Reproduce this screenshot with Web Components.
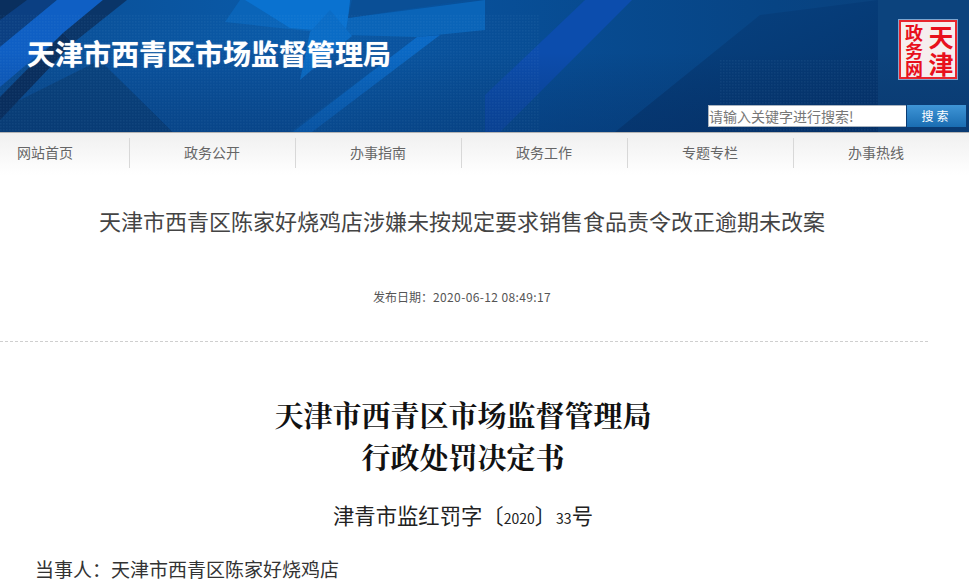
<!DOCTYPE html>
<html lang="zh-CN"><head><meta charset="utf-8"><title>天津市西青区市场监督管理局</title>
<style>
html,body{margin:0;padding:0;background:#fff;overflow:hidden;height:584px}
body{font-family:"Liberation Sans","Noto Sans CJK SC",sans-serif}
</style></head><body>
<site-banner>
  <span slot="title">天津市西青区市场监督管理局</span>
</site-banner>
<site-nav>
  <nav-item first>网站首页</nav-item><nav-item>政务公开</nav-item><nav-item>办事指南</nav-item><nav-item>政务工作</nav-item><nav-item>专题专栏</nav-item><nav-item>办事热线</nav-item>
</site-nav>
<article-head date="2020-06-12 08:49:17">天津市西青区陈家好烧鸡店涉嫌未按规定要求销售食品责令改正逾期未改案</article-head>
<article-body></article-body>
<script>
function def(name,html){customElements.define(name,class extends HTMLElement{constructor(){super();const s=this.attachShadow({mode:'open'});s.innerHTML=html;}connectedCallback(){const d=this.shadowRoot.querySelector('[data-date]');if(d)d.textContent=this.getAttribute('date');}});}
def('gov-seal',`<style>
:host{display:grid;grid-template-columns:26px 28px;width:60px;height:61px;box-sizing:border-box;background:#f6eeee;border:1px solid #7fa6cf;padding:2px;font-family:"Noto Sans CJK SC",sans-serif;color:#e8101c;font-weight:700;box-shadow:inset 0 0 0 2px #e8262e;overflow:hidden}
.l,.r{display:flex;flex-direction:column;align-items:center}
.l{font-size:18px;line-height:18px;padding-top:1px}
.r{font-size:25px;line-height:27px;padding-top:1px}
</style><div class="l"><span>政</span><span>务</span><span>网</span></div><div class="r"><span>天</span><span>津</span></div>`);
def('search-box',`<style>
:host{display:flex;width:258px;height:22px;font-family:"Noto Sans CJK SC",sans-serif}
.i{width:198px;box-sizing:border-box;background:#fff;color:#777;font-size:14px;line-height:21px;border:1px solid #a9b4c0;border-width:1px 0 1px 1px;white-space:nowrap;overflow:hidden}
.b{flex:1;margin-left:1px;background:linear-gradient(#3f95d6,#1a6db2);color:#fff;font-size:12px;line-height:22px;text-align:center;letter-spacing:3px}
</style><div class="i">请输入关键字进行搜索!</div><div class="b">搜索</div>`);
def('site-banner',`<style>
:host{display:flex;position:relative;height:132px;box-sizing:border-box;overflow:hidden;background:#0a4c92;justify-content:space-between}
svg.bg{position:absolute;left:0;top:0;width:969px;height:132px}
.t{position:relative;padding:36px 0 0 27px;font:700 28px/34px "Noto Sans CJK SC",sans-serif;color:#fff;text-shadow:0 0 1px rgba(255,255,255,.6)}
.side{position:relative;display:flex;flex-direction:column;align-items:flex-end;padding:19px 3px 0 0}
gov-seal{margin:0 8px 25px 0}
</style>
<svg class="bg" viewBox="0 0 969 132" preserveAspectRatio="none">
<defs>
<linearGradient id="g" x1="0" y1="0" x2="1" y2="0"><stop offset="0" stop-color="#0a4e95"/><stop offset=".3" stop-color="#0a5aa8"/><stop offset=".5" stop-color="#084f98"/><stop offset=".8" stop-color="#074484"/><stop offset="1" stop-color="#0b4079"/></linearGradient>
<linearGradient id="d" x1="0" y1="0" x2="0" y2="1"><stop offset=".4" stop-color="#06234f" stop-opacity="0"/><stop offset="1" stop-color="#052b60" stop-opacity=".35"/></linearGradient>
<linearGradient id="r" x1="0" y1="0" x2="1" y2="1"><stop offset="0" stop-color="#074484"/><stop offset="1" stop-color="#05336b"/></linearGradient>
<pattern id="p" width="3" height="3" patternUnits="userSpaceOnUse"><rect width="1.5" height="1.5" fill="#7fb4e8" opacity=".07"/></pattern>
</defs>
<rect width="969" height="132" fill="url(#g)"/>
<polygon points="0,132 0,110 100,60 173,132" fill="#0a4480"/>
<polygon points="100,60 290,132 173,132" fill="#0a52a0"/>
<polygon points="0,0 57,0 0,47" fill="#0b3f82"/>
<polygon points="0,0 27,0 0,20" fill="#0a2f5e"/>
<polygon points="57,0 103,0 0,87 0,47" fill="#0f5fc4"/>
<polygon points="103,0 127,0 73,43 63,33" fill="#0a3568"/>
<polygon points="63,33 73,43 0,120 0,97" fill="#0a2f5e"/>
<polygon points="100,60 415,38 290,132 173,132" fill="#0a539f"/>
<polygon points="240,0 350,0 348,18 485,0 485,30 417,37 345,35 225,22" fill="#0a64b8"/>
<polygon points="245,0 350,0 348,18 345,35 315,30 290,28" fill="#0a72d0"/>
<polygon points="330,10 352,36 300,80 310,32" fill="#0a6cc6"/>
<polygon points="348,18 352,0 467,0" fill="#0a4f96"/>
<polygon points="293,132 417,37 440,35 312,132" fill="#0a68c4"/>
<polygon points="485,132 485,95 585,0 632,0 500,132" fill="#0c4dad"/>
<polygon points="615,132 760,15 878,0 878,132" fill="url(#r)"/>
<rect x="878" width="91" height="132" fill="#0c437d"/>
<rect width="969" height="132" fill="url(#d)"/>
<rect x="0" y="15" width="540" height="117" fill="url(#p)"/>
<rect x="720" y="60" width="158" height="72" fill="url(#p)"/>
</svg>
<div class="t"><slot name="title"></slot></div>
<div class="side"><gov-seal></gov-seal><search-box></search-box></div>`);
def('site-nav',`<style>
:host{display:flex;height:43px;box-sizing:border-box;border-top:1px solid #b4b4b4;background:linear-gradient(#f0f0f0,#fff);padding-top:5px}
</style><slot></slot>`);
def('nav-item',`<style>
:host{display:block;flex:0 0 166px;height:30px;box-sizing:border-box;border-left:1px solid #d8d8d8;padding-right:1px;font:14px/29px "Noto Sans CJK SC",sans-serif;color:#666;text-align:center}
:host([first]){flex:0 0 129px;border-left:0;text-align:left;padding-left:17px}
</style><slot></slot>`);
def('article-head',`<style>
:host{display:block;width:928px;box-sizing:border-box;border-bottom:1px dashed #cfcfcf;height:167px;padding-top:29px;text-align:center;font-family:"Noto Sans CJK SC",sans-serif}
.t{font-size:22px;line-height:32px;color:#444;margin-left:-4px}
.d{font-size:12px;line-height:18px;color:#555;margin:52px 0 0 -4px}
.d span{letter-spacing:.37px}
</style><div class="t"><slot></slot></div><div class="d">发布日期&#xFF1A;<span data-date></span></div>`);
def('article-body',`<style>
:host{display:block;font-family:"Noto Sans CJK SC",sans-serif;color:#333}
.h{width:926px;padding-top:52px;text-align:center;font-size:29px;line-height:42px;font-weight:700;color:#111;font-family:"Noto Serif CJK SC","Noto Sans CJK SC",serif}
.s{width:926px;text-align:center;margin-top:22px;font-size:21.33px;line-height:30px;color:#222}
.s small{font-size:14px}
.p{margin:22px 0 0 35px;font-size:19px;line-height:28px;color:#333;white-space:nowrap}
</style><div class="h">天津市西青区市场监督管理局<br>行政处罚决定书</div><div class="s">津青市监红罚字〔<small>2020</small>〕<small>33</small>号</div><div class="p">当事人&#xFF1A;天津市西青区陈家好烧鸡店</div>`);
</script>
</body></html>
